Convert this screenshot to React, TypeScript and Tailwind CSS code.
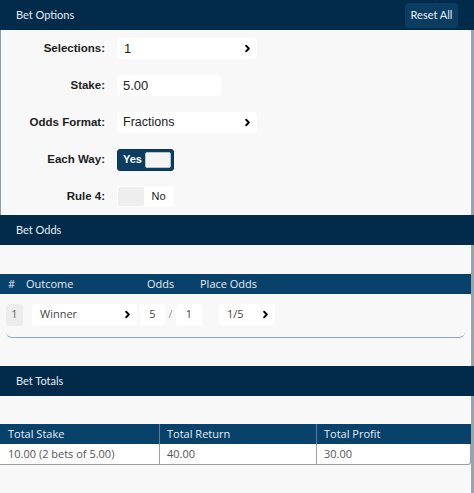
import { ChevronRight } from "lucide-react";

const sans = "font-['Liberation_Sans',Arial,sans-serif]";
const geo = "font-['Open_Sans','Noto_Sans',sans-serif]";

function Chevron() {
  return <ChevronRight size={11} strokeWidth={4} className="text-black" />;
}

function SectionHeader({ title, children }: { title: string; children?: React.ReactNode }) {
  return (
    <div className="flex h-[30px] items-center justify-between bg-[#022b4b] pl-4 pr-4 font-['Lato',sans-serif] text-[11px] text-[#e4ebf1]">
      <span>{title}</span>
      {children}
    </div>
  );
}

function FormRow({ label, children }: { label: string; children: React.ReactNode }) {
  return (
    <div className="flex h-[37px] items-center">
      <div className={`w-[104px] text-right text-[11.5px] font-bold text-[#1d1d1d] ${sans}`}>{label}</div>
      <div className="ml-3">{children}</div>
    </div>
  );
}

export default function App() {
  return (
    <div className="h-[493px] w-[474px] overflow-hidden bg-[#f8f8f8]">
      {/* Bet Options */}
      <SectionHeader title="Bet Options">
        <button className="h-[25px] w-[53px] rounded bg-[#0b3d62] font-['Lato',sans-serif] text-[11px] text-[#e8eef3]">
          Reset All
        </button>
      </SectionHeader>
      <div className={`h-[185px] border-l border-r-[3px] border-l-[#8f9ba6] border-r-[#9aa4ad] ${sans}`}>
        <FormRow label="Selections:">
          <div className="flex h-[21px] w-[140px] items-center justify-between rounded-sm bg-white pl-[7px] pr-[4px] text-[13px] text-[#222]">
            <span>1</span>
            <Chevron />
          </div>
        </FormRow>
        <FormRow label="Stake:">
          <div className="flex h-[21px] w-[104px] items-center rounded-sm bg-white pl-[6px] text-[13px] text-[#222]">5.00</div>
        </FormRow>
        <FormRow label="Odds Format:">
          <div className="flex h-[21px] w-[140px] items-center justify-between rounded-sm bg-white pl-[6px] pr-[4px] text-[12.5px] text-[#222]">
            <span>Fractions</span>
            <Chevron />
          </div>
        </FormRow>
        <FormRow label="Each Way:">
          <div className="flex h-[22px] w-[57px] items-center rounded-[3px] border border-[#0a3458] bg-[#0b3d62] p-[2px]">
            <span className="flex-1 text-center text-[11px] font-bold text-white">Yes</span>
            <span className="h-full w-[26px] rounded-[2px] border border-[#b8c2ca] bg-[#f4f4f4]" />
          </div>
        </FormRow>
        <FormRow label="Rule 4:">
          <div className="flex h-[21px] w-[57px] items-center rounded-[3px] bg-white p-[1px]">
            <span className="h-full w-[26px] rounded-[2px] bg-[#eeeeee]" />
            <span className="flex-1 text-center text-[11px] text-[#222]">No</span>
          </div>
        </FormRow>
      </div>

      {/* Bet Odds */}
      <SectionHeader title="Bet Odds" />
      <div className={`h-[121px] border-r-[3px] border-r-[#9aa4ad] pt-[29px] ${geo}`}>
        <div className="flex h-[20px] items-center bg-[#08416a] text-[11px] text-[#e6edf3]">
          <span className="ml-[8px] w-[18px]">#</span>
          <span className="w-[121px]">Outcome</span>
          <span className="w-[53px]">Odds</span>
          <span>Place Odds</span>
        </div>
        <div className="mx-[6px] flex h-[44px] items-center rounded-b-[6px] border-b-[1.5px] border-[#8ea6bb] pb-[2px] text-[11px] text-[#444]">
          <span className="flex h-[22px] w-[17px] items-center justify-center rounded-sm bg-[#ececec] text-[#666]">1</span>
          <div className="ml-[9px] flex h-[22px] w-[105px] items-center justify-between rounded-sm bg-white pl-[8px] pr-[4px]">
            <span>Winner</span>
            <Chevron />
          </div>
          <span className="ml-[3px] flex h-[22px] w-[25px] items-center justify-center rounded-sm bg-white">5</span>
          <span className="w-[11px] text-center text-[#999]">/</span>
          <span className="flex h-[22px] w-[26px] items-center justify-center rounded-sm bg-white">1</span>
          <div className="ml-[17px] flex h-[22px] w-[56px] items-center justify-between rounded-sm bg-white pl-[8px] pr-[4px]">
            <span>1/5</span>
            <Chevron />
          </div>
        </div>
      </div>

      {/* Bet Totals */}
      <SectionHeader title="Bet Totals" />
      <div className={`h-[98px] border-r-[3px] border-r-[#9aa4ad] pt-[28px] ${geo}`}>
        <div className="grid h-[20px] grid-cols-[159px_157px_1fr] bg-[#08416a] text-[11px] text-[#e6edf3]">
          <span className="flex items-center pl-[8px]">Total Stake</span>
          <span className="flex items-center border-l border-[#5d7c95] pl-[7px]">Total Return</span>
          <span className="flex items-center border-l border-[#5d7c95] pl-[7px]">Total Profit</span>
        </div>
        <div className="grid h-[21px] grid-cols-[159px_157px_1fr] rounded-br-[3px] border-b border-r border-[#9aa0a6] bg-white text-[11px] text-[#555]">
          <span className="flex items-center pl-[8px]">10.00 (2 bets of 5.00)</span>
          <span className="flex items-center border-l border-[#9aa0a6] pl-[7px]">40.00</span>
          <span className="flex items-center border-l border-[#9aa0a6] pl-[7px]">30.00</span>
        </div>
      </div>
    </div>
  );
}
